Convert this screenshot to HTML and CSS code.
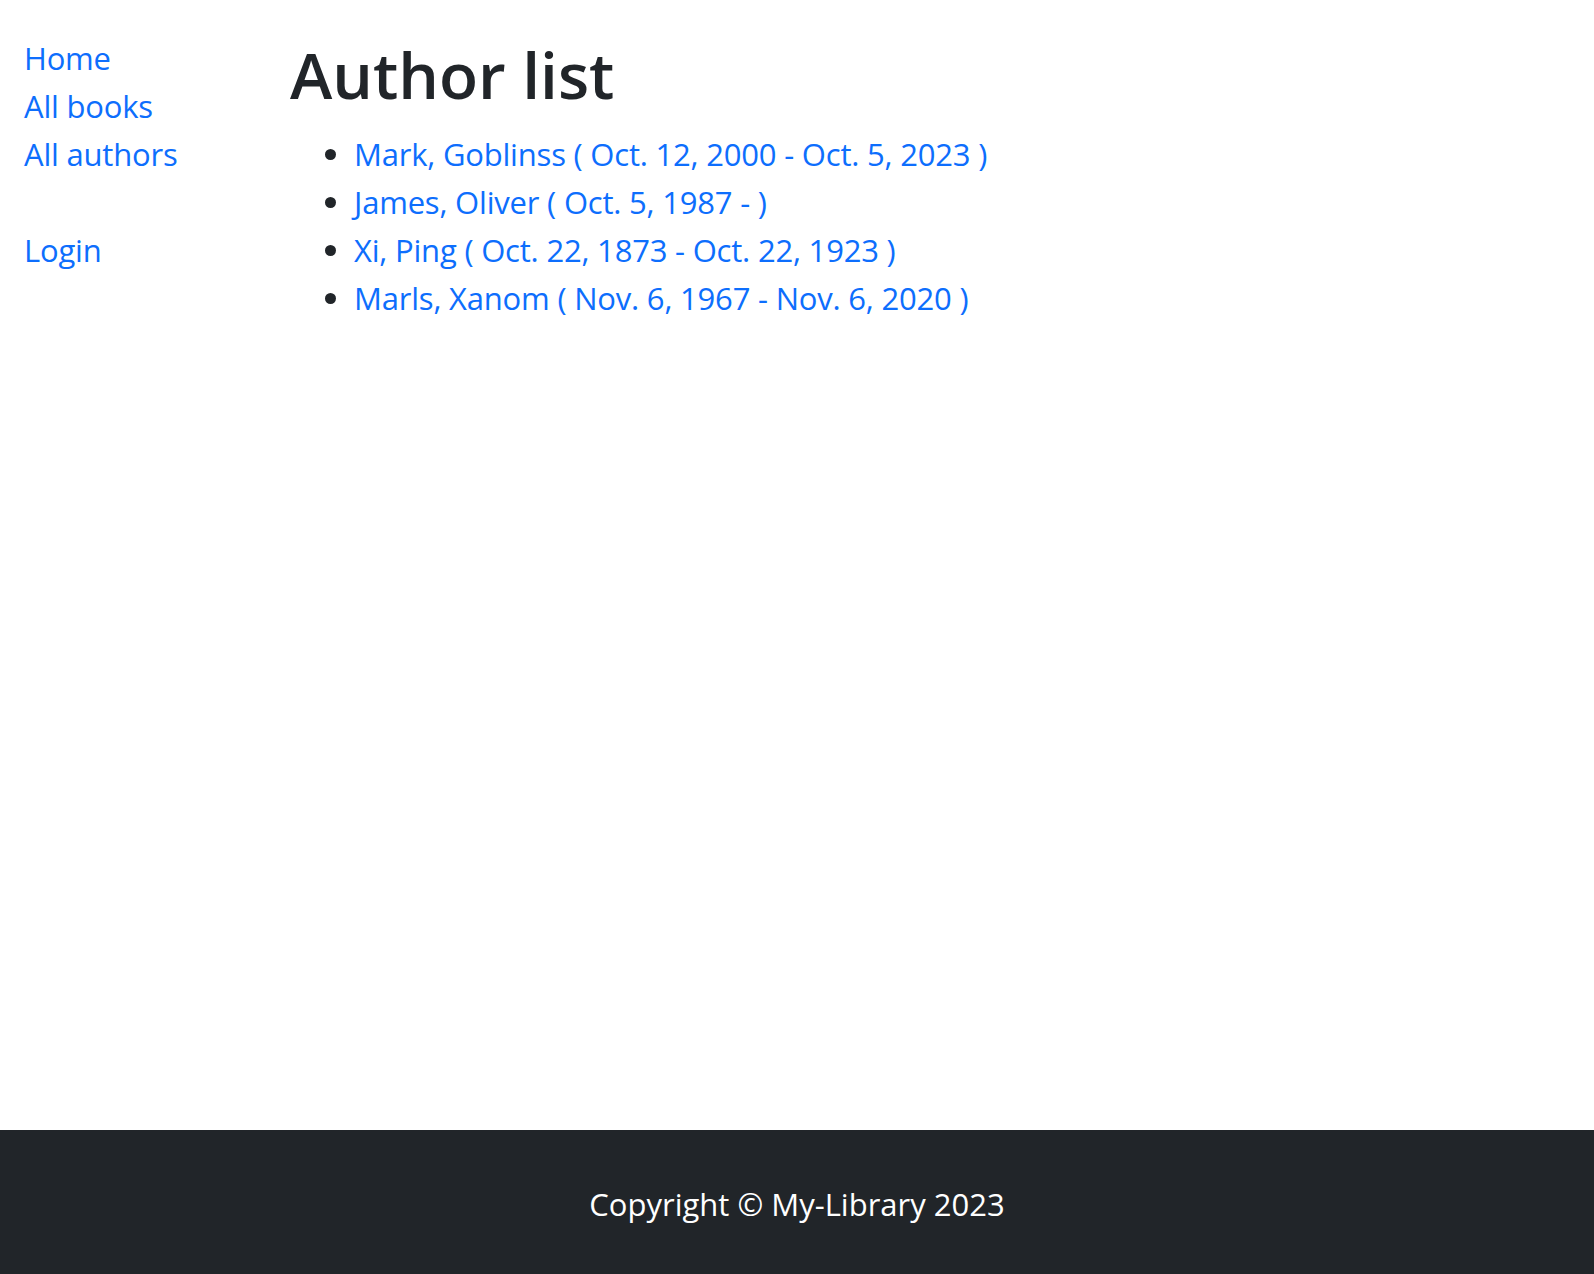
FILE: index.html
```html
<!DOCTYPE html>
<html lang="en">
<head>
<meta charset="utf-8">
<title>Local Library</title>
<link rel="stylesheet" href="styles.css">
</head>
<body>
<div class="page">
  <div class="row">
    <nav class="sidebar">
      <ul class="sidebar-nav">
        <li><a href="#">Home</a></li>
        <li><a href="#">All books</a></li>
        <li><a href="#">All authors</a></li>
        <li class="login"><a href="#">Login</a></li>
      </ul>
    </nav>
    <main class="content">
      <h1 class="title">Author list</h1>
      <ul class="author-list">
        <li><a href="#">Mark, Goblinss ( Oct. 12, 2000 - Oct. 5, 2023 )</a></li>
        <li><a href="#">James, Oliver ( Oct. 5, 1987 - )</a></li>
        <li><a href="#">Xi, Ping ( Oct. 22, 1873 - Oct. 22, 1923 )</a></li>
        <li><a href="#">Marls, Xanom ( Nov. 6, 1967 - Nov. 6, 2020 )</a></li>
      </ul>
    </main>
  </div>
</div>
<footer class="footer">Copyright © My-Library 2023</footer>
</body>
</html>
```
FILE: styles.css
```css
* { box-sizing: border-box; }
html, body { margin: 0; padding: 0; }
body {
  min-height: 100vh;
  display: flex;
  flex-direction: column;
  font-family: "Open Sans", "Noto Sans", sans-serif;
  font-size: 31px;
  line-height: 48px;
  color: #212529;
  background: #fff;
}
a { color: #0d6efd; text-decoration: none; letter-spacing: -0.2px; }
.page { flex: 1; padding: 34px 24px 0; }
.row { display: flex; }
.sidebar { width: 242px; flex: none; }
.sidebar-nav { list-style: none; margin: 0; padding: 0; }
.sidebar-nav .login { margin-top: 48px; }
.content { flex: 1; padding-left: 24px; }
.title {
  margin: 0 0 14px;
  font-size: 64px;
  line-height: 81.6px;
  font-weight: 600;
}
.author-list { margin: 0; padding-left: 64px; }
.footer {
  background: #212529;
  color: #fff;
  text-align: center;
  padding: 50px 0 46px;
}
```
